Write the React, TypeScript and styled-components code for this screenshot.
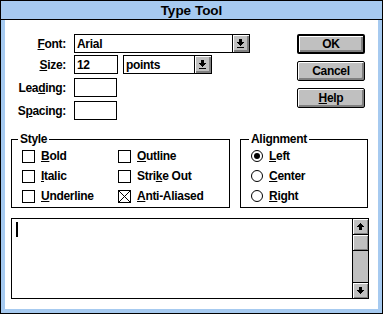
import React from "react";
import styled, { createGlobalStyle } from "styled-components";

const GlobalStyle = createGlobalStyle`
  html, body { margin: 0; padding: 0; background: #fff; }
  body { font-family: "Liberation Sans", Arial, sans-serif; }
  *, *::before, *::after { box-sizing: border-box; }
`;

const Window = styled.div`
  width: 383px;
  height: 314px;
  border: 1px solid #000;
  background: #a6caf0;
  display: flex;
  flex-direction: column;
  font: bold 12px "Liberation Sans", Arial, sans-serif;
  letter-spacing: -0.3px;
  color: #000;
`;

const TitleBar = styled.div`
  height: 19px;
  flex: none;
  border-bottom: 1px solid #000;
  display: flex;
  align-items: center;
  justify-content: center;
  font-size: 13.5px;
  letter-spacing: 0;
`;

const Frame = styled.div`
  flex: 1;
  padding: 0 4px 4px 4px;
  display: flex;
`;

const Client = styled.div`
  flex: 1;
  background: #fff;
  padding: 14px 9px 10px 6px;
  display: flex;
  flex-direction: column;
`;

const TopSection = styled.div`
  display: flex;
  justify-content: space-between;
  padding-right: 4px;
`;

const Form = styled.div`
  display: flex;
  flex-direction: column;
`;

const FormRow = styled.div<{ $gap: number }>`
  display: flex;
  align-items: center;
  margin-top: ${(p) => p.$gap}px;
  height: 19px;
`;

const Label = styled.div`
  width: 55px;
  margin-right: 8px;
  text-align: right;
  white-space: nowrap;
`;

const U = styled.span`
  text-decoration: underline;
  text-decoration-thickness: 1px;
  text-underline-offset: 1px;
`;

const TextBox = styled.div<{ $w: number }>`
  width: ${(p) => p.$w}px;
  height: 19px;
  border: 1px solid #000;
  background: #fff;
  padding-left: 2px;
  display: flex;
  align-items: center;
`;

const Combo = styled.div<{ $w: number; $ml?: number }>`
  width: ${(p) => p.$w}px;
  margin-left: ${(p) => p.$ml ?? 0}px;
  height: 19px;
  border: 1px solid #000;
  background: #fff;
  display: flex;
`;

const ComboText = styled.div`
  flex: 1;
  padding-left: 2px;
  display: flex;
  align-items: center;
`;

const ComboButton = styled.div`
  width: 17px;
  border-left: 1px solid #000;
  background: #c0c0c0;
  box-shadow: inset 1px 1px 0 #fff, inset -1px -1px 0 #808080, inset -2px -2px 0 #808080;
  display: flex;
  align-items: center;
  justify-content: center;
  padding: 0 1px 1px 0;
`;

const ButtonColumn = styled.div`
  display: flex;
  flex-direction: column;
  gap: 7px;
`;

const PushButton = styled.div<{ $default?: boolean }>`
  width: 68px;
  height: 20px;
  border: ${(p) => (p.$default ? 2 : 1)}px solid #000;
  border-radius: 2px;
  background: #c0c0c0;
  box-shadow: inset 1px 1px 0 #fff, inset -1px -1px 0 #808080, inset -2px -2px 0 #808080;
  display: flex;
  align-items: center;
  justify-content: center;
  padding-bottom: 1px;
`;

const GroupRow = styled.div`
  display: flex;
  gap: 10px;
  margin-top: 12px;
`;

const Group = styled.fieldset<{ $w: number }>`
  width: ${(p) => p.$w}px;
  margin: 0;
  padding: 0 0 1px 0;
  border: 1px solid #000;
  min-width: 0;
`;

const Legend = styled.legend<{ $indent: number }>`
  margin-left: ${(p) => p.$indent}px;
  padding: 0 2px;
  line-height: 14px;
`;

const OptionGrid = styled.div<{ $cols: string }>`
  display: grid;
  grid-template-columns: ${(p) => p.$cols};
  grid-auto-rows: 20px;
  padding-left: 10px;
`;

const Option = styled.div`
  display: flex;
  align-items: center;
  gap: 6px;
  white-space: nowrap;
`;

const CheckBox = styled.div`
  width: 13px;
  height: 13px;
  border: 1px solid #000;
  background: #fff;
  display: flex;
`;

const Radio = styled.div`
  width: 12px;
  height: 12px;
  border: 1px solid #000;
  border-radius: 50%;
  background: #fff;
  display: flex;
  align-items: center;
  justify-content: center;
`;

const RadioDot = styled.div`
  width: 6px;
  height: 6px;
  border-radius: 50%;
  background: #000;
`;

const TextArea = styled.div`
  flex: 1;
  margin-top: 10px;
  border: 1px solid #000;
  display: flex;
`;

const Editor = styled.div`
  flex: 1;
  padding: 3px 0 0 4px;
`;

const Caret = styled.div`
  width: 2px;
  height: 15px;
  background: #000;
`;

const ScrollBar = styled.div`
  width: 16px;
  border-left: 1px solid #000;
  display: flex;
  flex-direction: column;
  background: #c0c0c0;
`;

const ScrollPart = styled.div<{ $top?: boolean; $bottom?: boolean }>`
  height: 16px;
  flex: none;
  background: #c0c0c0;
  border-bottom: ${(p) => (p.$bottom ? "1px solid #000" : "none")};
  border-top: ${(p) => (p.$top ? "1px solid #000" : "none")};
  box-shadow: inset 1px 1px 0 #fff, inset -1px -1px 0 #808080;
  display: flex;
  align-items: center;
  justify-content: center;
`;

const Track = styled.div`
  flex: 1;
  background: #c0c0c0;
`;

const DropArrow = () => (
  <svg width="7" height="9" viewBox="0 0 7 9" shapeRendering="crispEdges">
    <rect x="2" y="0" width="3" height="3" fill="#000" />
    <rect x="0" y="3" width="7" height="1" fill="#000" />
    <rect x="1" y="4" width="5" height="1" fill="#000" />
    <rect x="2" y="5" width="3" height="1" fill="#000" />
    <rect x="3" y="6" width="1" height="1" fill="#000" />
    <rect x="0" y="8" width="7" height="1" fill="#000" />
  </svg>
);

const UpArrow = () => (
  <svg width="7" height="7" viewBox="0 0 7 7" shapeRendering="crispEdges">
    <rect x="3" y="0" width="1" height="1" fill="#000" />
    <rect x="2" y="1" width="3" height="1" fill="#000" />
    <rect x="1" y="2" width="5" height="1" fill="#000" />
    <rect x="0" y="3" width="7" height="1" fill="#000" />
    <rect x="2" y="4" width="3" height="3" fill="#000" />
  </svg>
);

const DownArrow = () => (
  <svg width="7" height="7" viewBox="0 0 7 7" shapeRendering="crispEdges">
    <rect x="2" y="0" width="3" height="3" fill="#000" />
    <rect x="0" y="3" width="7" height="1" fill="#000" />
    <rect x="1" y="4" width="5" height="1" fill="#000" />
    <rect x="2" y="5" width="3" height="1" fill="#000" />
    <rect x="3" y="6" width="1" height="1" fill="#000" />
  </svg>
);

const Cross = () => (
  <svg width="11" height="11" viewBox="0 0 11 11">
    <line x1="0" y1="0" x2="11" y2="11" stroke="#000" strokeWidth="1" />
    <line x1="11" y1="0" x2="0" y2="11" stroke="#000" strokeWidth="1" />
  </svg>
);

const Check = ({ checked, children }: { checked?: boolean; children: React.ReactNode }) => (
  <Option>
    <CheckBox>{checked && <Cross />}</CheckBox>
    <span>{children}</span>
  </Option>
);

const RadioOpt = ({ checked, children }: { checked?: boolean; children: React.ReactNode }) => (
  <Option>
    <Radio>{checked && <RadioDot />}</Radio>
    <span>{children}</span>
  </Option>
);

export default function App() {
  return (
    <>
      <GlobalStyle />
      <Window>
        <TitleBar>Type Tool</TitleBar>
        <Frame>
          <Client>
            <TopSection>
              <Form>
                <FormRow $gap={0}>
                  <Label>
                    <U>F</U>ont:
                  </Label>
                  <Combo $w={176}>
                    <ComboText>Arial</ComboText>
                    <ComboButton>
                      <DropArrow />
                    </ComboButton>
                  </Combo>
                </FormRow>
                <FormRow $gap={2}>
                  <Label>
                    <U>S</U>ize:
                  </Label>
                  <TextBox $w={44}>12</TextBox>
                  <Combo $w={89} $ml={5}>
                    <ComboText>points</ComboText>
                    <ComboButton>
                      <DropArrow />
                    </ComboButton>
                  </Combo>
                </FormRow>
                <FormRow $gap={4}>
                  <Label>
                    Lea<U>d</U>ing:
                  </Label>
                  <TextBox $w={43} />
                </FormRow>
                <FormRow $gap={4}>
                  <Label>
                    S<U>p</U>acing:
                  </Label>
                  <TextBox $w={43} />
                </FormRow>
              </Form>
              <ButtonColumn>
                <PushButton $default>OK</PushButton>
                <PushButton>Cancel</PushButton>
                <PushButton>
                  <span>
                    <U>H</U>elp
                  </span>
                </PushButton>
              </ButtonColumn>
            </TopSection>
            <GroupRow>
              <Group $w={219}>
                <Legend $indent={6}>Style</Legend>
                <OptionGrid $cols="96px auto">
                  <Check>
                    <U>B</U>old
                  </Check>
                  <Check>
                    <U>O</U>utline
                  </Check>
                  <Check>
                    <U>I</U>talic
                  </Check>
                  <Check>
                    Stri<U>k</U>e Out
                  </Check>
                  <Check>
                    <U>U</U>nderline
                  </Check>
                  <Check checked>
                    <U>A</U>nti-Aliased
                  </Check>
                </OptionGrid>
              </Group>
              <Group $w={128}>
                <Legend $indent={8}>Alignment</Legend>
                <OptionGrid $cols="auto">
                  <RadioOpt checked>
                    <U>L</U>eft
                  </RadioOpt>
                  <RadioOpt>
                    <U>C</U>enter
                  </RadioOpt>
                  <RadioOpt>
                    <U>R</U>ight
                  </RadioOpt>
                </OptionGrid>
              </Group>
            </GroupRow>
            <TextArea>
              <Editor>
                <Caret />
              </Editor>
              <ScrollBar>
                <ScrollPart $bottom>
                  <UpArrow />
                </ScrollPart>
                <ScrollPart $bottom />
                <Track />
                <ScrollPart $top>
                  <DownArrow />
                </ScrollPart>
              </ScrollBar>
            </TextArea>
          </Client>
        </Frame>
      </Window>
    </>
  );
}
